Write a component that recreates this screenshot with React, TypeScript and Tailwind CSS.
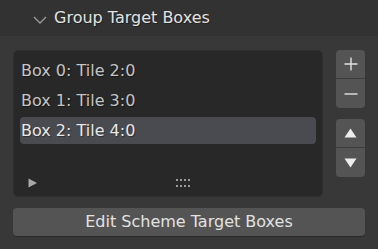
import React from 'react';

const items = ['Box 0: Tile 2:0', 'Box 1: Tile 3:0', 'Box 2: Tile 4:0'];
const selected = 2;

function SideButton({ children, top }: { children: React.ReactNode; top?: boolean }) {
    return (
        <div
            className={`flex h-[29px] w-[29px] items-center justify-center bg-[#545454] ${
                top ? 'rounded-t-[4px] border-b border-[#3c3c3c]' : 'rounded-b-[4px]'
            }`}
        >
            {children}
        </div>
    );
}

export default function App() {
    return (
        <div
            className="w-[378px] h-[249px] overflow-hidden bg-[#383838] text-[16px] [text-shadow:1px_1px_1px_rgba(0,0,0,0.4)]"
            style={{ fontFamily: '"DejaVu Sans", sans-serif' }}
        >
            {/* Panel header */}
            <div className="flex h-[36px] items-center bg-[#323232] pl-[33px]">
                <svg width="14" height="8" viewBox="0 0 14 8" className="mt-[3px] shrink-0">
                    <path d="M1 1 L7 7 L13 1" fill="none" stroke="#9c9c9c" strokeWidth="1.3" />
                </svg>
                <span className="ml-[7px] leading-none text-[#e2e2e2]">Group Target Boxes</span>
            </div>

            {/* Panel body */}
            <div className="flex flex-col pl-[13px] pt-[14px]">
                <div className="flex gap-[13px]">
                    {/* List */}
                    <div className="relative flex h-[147px] w-[310px] flex-col gap-[3px] rounded-[5px] border border-[#2f2f2f] bg-[#282828] px-[6px] pt-[6px]">
                        {items.map((label, idx) => (
                            <div
                                key={idx}
                                className={`flex h-[27px] items-center rounded-[4px] pl-[1px] leading-none ${
                                    idx === selected ? 'bg-[#4a4b51] text-[#e8e8e8]' : 'text-[#c4c4c4]'
                                }`}
                            >
                                {label}
                            </div>
                        ))}
                        <div className="mt-auto flex h-[22px] items-start pb-[8px]">
                            <svg width="10" height="10" viewBox="0 0 10 10" className="ml-[8px] mt-[4px]">
                                <path d="M0.5 0.5 L9 5 L0.5 9.5 Z" fill="#a8a8a8" />
                            </svg>
                            <div className="ml-[138px] mt-[5px] grid grid-cols-4 gap-x-[2px] gap-y-[4px]">
                                {Array.from({ length: 8 }).map((_, i) => (
                                    <span key={i} className="h-[2px] w-[2px] bg-[#9a9a9a]" />
                                ))}
                            </div>
                        </div>
                    </div>

                    {/* Side buttons */}
                    <div className="flex flex-col">
                        <SideButton top>
                            <svg width="14" height="14" viewBox="0 0 14 14">
                                <path d="M7 0.5 V13.5 M0.5 7 H13.5" stroke="#e2e2e2" strokeWidth="1.4" />
                            </svg>
                        </SideButton>
                        <SideButton>
                            <svg width="14" height="14" viewBox="0 0 14 14">
                                <path d="M0.5 7 H13.5" stroke="#e2e2e2" strokeWidth="1.4" />
                            </svg>
                        </SideButton>
                        <div className="h-[11px]" />
                        <SideButton top>
                            <svg width="13" height="10" viewBox="0 0 13 10">
                                <path d="M6.5 0.5 L12.5 9.5 L0.5 9.5 Z" fill="#ececec" />
                            </svg>
                        </SideButton>
                        <SideButton>
                            <svg width="13" height="10" viewBox="0 0 13 10">
                                <path d="M0.5 0.5 L12.5 0.5 L6.5 9.5 Z" fill="#ececec" />
                            </svg>
                        </SideButton>
                    </div>
                </div>

                {/* Operator button */}
                <button className="mt-[11px] flex h-[28px] w-[352px] items-center justify-center rounded-[4px] bg-[#545454] leading-none text-[#e2e2e2] shadow-[0_1px_0_rgba(0,0,0,0.25)]">
                    Edit Scheme Target Boxes
                </button>
            </div>
        </div>
    );
}
